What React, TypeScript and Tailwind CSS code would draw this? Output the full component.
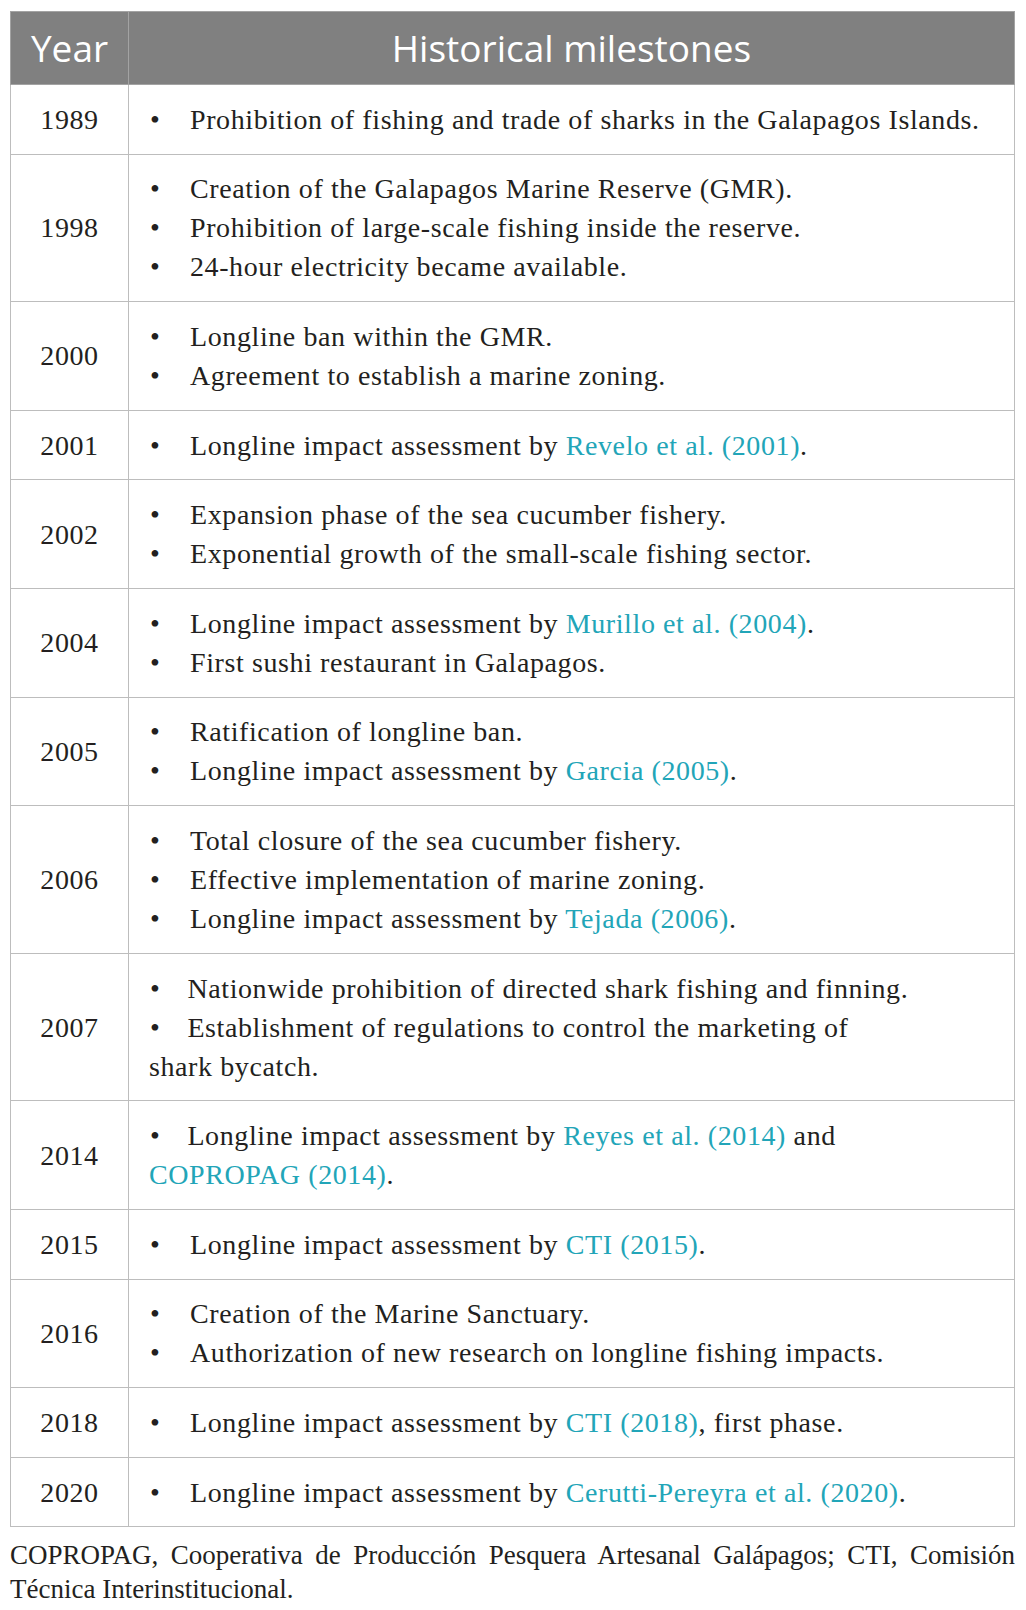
import React from 'react';

type Part = string | { link: string } | { br: true };

type Row = {
  year: string;
  items: Part[][];
  inline?: boolean; // bullet set inline, so a wrapped line goes back to the cell edge
};

const ROWS: Row[] = [
  { year: '1989', items: [['Prohibition of fishing and trade of sharks in the Galapagos Islands.']] },
  {
    year: '1998',
    items: [
      ['Creation of the Galapagos Marine Reserve (GMR).'],
      ['Prohibition of large-scale fishing inside the reserve.'],
      ['24-hour electricity became available.'],
    ],
  },
  { year: '2000', items: [['Longline ban within the GMR.'], ['Agreement to establish a marine zoning.']] },
  { year: '2001', items: [['Longline impact assessment by ', { link: 'Revelo et al. (2001)' }, '.']] },
  {
    year: '2002',
    items: [['Expansion phase of the sea cucumber fishery.'], ['Exponential growth of the small-scale fishing sector.']],
  },
  {
    year: '2004',
    items: [['Longline impact assessment by ', { link: 'Murillo et al. (2004)' }, '.'], ['First sushi restaurant in Galapagos.']],
  },
  {
    year: '2005',
    items: [['Ratification of longline ban.'], ['Longline impact assessment by ', { link: 'Garcia (2005)' }, '.']],
  },
  {
    year: '2006',
    items: [
      ['Total closure of the sea cucumber fishery.'],
      ['Effective implementation of marine zoning.'],
      ['Longline impact assessment by ', { link: 'Tejada (2006)' }, '.'],
    ],
  },
  {
    year: '2007',
    inline: true,
    items: [
      ['Nationwide prohibition of directed shark fishing and finning.'],
      ['Establishment of regulations to control the marketing of', { br: true }, 'shark bycatch.'],
    ],
  },
  {
    year: '2014',
    inline: true,
    items: [
      ['Longline impact assessment by ', { link: 'Reyes et al. (2014)' }, ' and', { br: true }, { link: 'COPROPAG (2014)' }, '.'],
    ],
  },
  { year: '2015', items: [['Longline impact assessment by ', { link: 'CTI (2015)' }, '.']] },
  {
    year: '2016',
    items: [['Creation of the Marine Sanctuary.'], ['Authorization of new research on longline fishing impacts.']],
  },
  { year: '2018', items: [['Longline impact assessment by ', { link: 'CTI (2018)' }, ', first phase.']] },
  { year: '2020', items: [['Longline impact assessment by ', { link: 'Cerutti-Pereyra et al. (2020)' }, '.']] },
];

const Text: React.FC<{ parts: Part[] }> = ({ parts }) => (
  <>
    {parts.map((p, i) => {
      if (typeof p === 'string') return <React.Fragment key={i}>{p}</React.Fragment>;
      if ('br' in p) return <br key={i} />;
      return (
        <span key={i} className="text-[#22a5b8]">
          {p.link}
        </span>
      );
    })}
  </>
);

const App: React.FC = () => {
  return (
    <div className="min-h-[1610px] w-[1026px] bg-white pt-[11px] px-[10px] text-[#231f20] font-['Liberation_Serif',serif]">
      <table className="w-[1005px] border-collapse table-fixed">
        <colgroup>
          <col className="w-[118px]" />
          <col />
        </colgroup>
        <thead>
          <tr className="h-[73px] bg-[#808080] text-white font-['Open_Sans',sans-serif] text-[37px]">
            <th className="border border-[#a3a3a3] font-normal text-center align-middle">Year</th>
            <th className="border border-[#a3a3a3] font-normal text-center align-middle">Historical milestones</th>
          </tr>
        </thead>
        <tbody className="text-[28px] leading-[39px] tracking-[0.6px]">
          {ROWS.map((row) => (
            <tr key={row.year}>
              <td className="border border-[#bdbdbd] text-center align-middle py-[14.8px]">{row.year}</td>
              <td className="border border-[#bdbdbd] align-middle py-[14.8px] pl-[20px] pr-[12px]">
                {row.inline
                  ? row.items.map((it, i) => (
                      <p key={i}>
                        <span className="pl-[1px] pr-[27px]">•</span>
                        <Text parts={it} />
                      </p>
                    ))
                  : row.items.map((it, i) => (
                      <div key={i} className="flex">
                        <span className="w-[41px] shrink-0 pl-[1px]">•</span>
                        <span>
                          <Text parts={it} />
                        </span>
                      </div>
                    ))}
              </td>
            </tr>
          ))}
        </tbody>
      </table>
      <div className="mt-[11px] w-[1005px] text-[27px] leading-[34px]">
        <div className="text-justify [text-align-last:justify]">
          COPROPAG, Cooperativa de Producción Pesquera Artesanal Galápagos; CTI, Comisión
        </div>
        <div>Técnica Interinstitucional.</div>
      </div>
    </div>
  );
};

export default App;
